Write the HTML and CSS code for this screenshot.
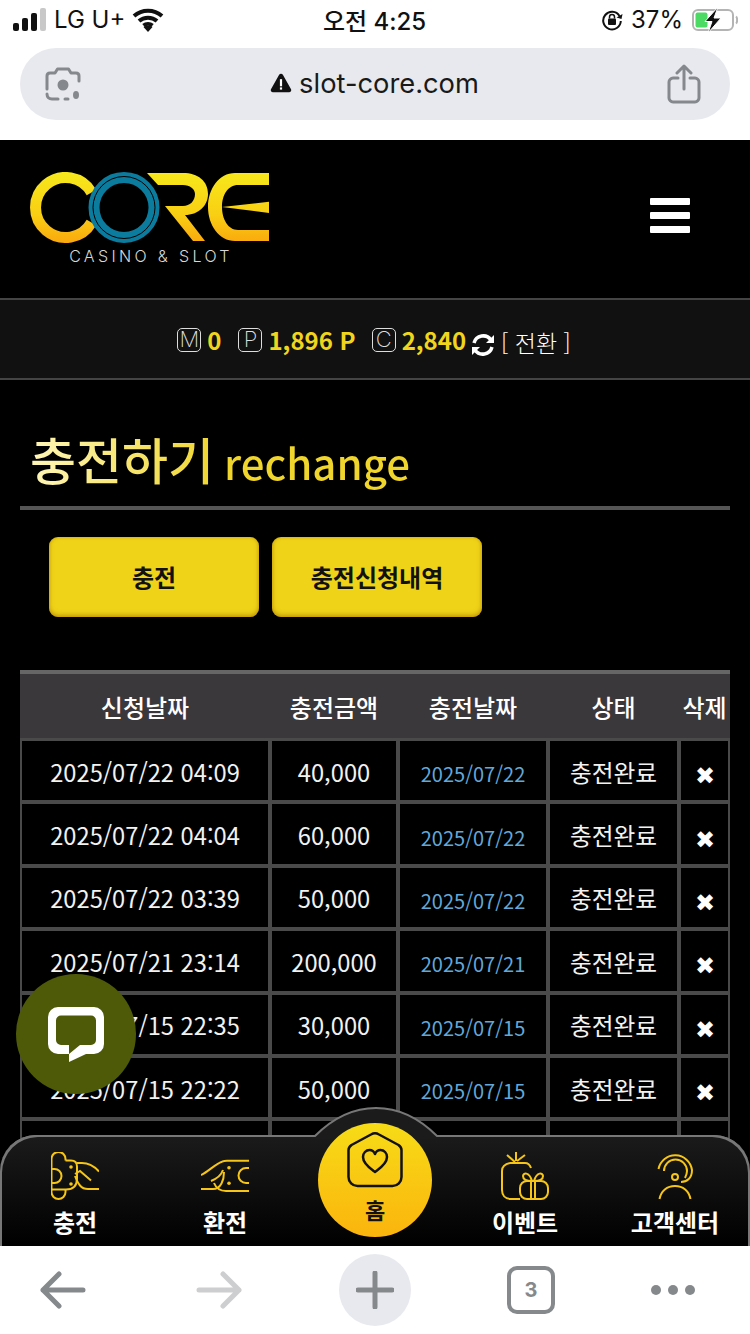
FILE: index.html
```html
<!DOCTYPE html>
<html lang="ko">
<head>
    <meta charset="utf-8">
    <title>CORE - 충전하기</title>
    <link rel="stylesheet" href="styles.css">
</head>
<body>
<div class="phone">
    <!-- 상태바 -->
    <div class="status-bar">
        <div class="status-left">
            <svg class="signal" width="34" height="24" viewBox="0 0 34 24"><rect x="0" y="15" width="6" height="8" rx="2" fill="#111"/><rect x="9" y="10" width="6" height="13" rx="2" fill="#111"/><rect x="18" y="5" width="6" height="18" rx="2" fill="#111"/><rect x="27" y="0" width="6" height="23" rx="2" fill="#c8c8c8"/></svg>
            <span>LG U+</span>
            <svg width="32" height="24" viewBox="0 0 32 24"><path d="M2 8c8-7 20-7 28 0M7 13c5-4.500 13-4.500 18 0M11.500 17.500c2.500-2 6.500-2 9 0" fill="none" stroke="#111" stroke-width="4"/><path d="M16 24l-4.500-5c2.500-2 6.500-2 9 0z" fill="#111"/></svg>
        </div>
        <div class="status-time">오전 4:25</div>
        <div class="status-right">
            <svg class="lock-rot" width="22" height="22" viewBox="0 0 22 22"><path d="M18.500 7A8.800 8.800 0 1 0 19.800 12" fill="none" stroke="#111" stroke-width="2"/><path d="M15.500 7.500l5 1.500 1-5z" fill="#111" transform="translate(0 1)"/><rect x="7" y="9.500" width="8" height="6.500" rx="1" fill="#111"/><path d="M8.500 9.500V8a2.500 2.500 0 0 1 5 0v1.500" fill="none" stroke="#111" stroke-width="1.500"/></svg>
            <span>37%</span>
            <svg class="battery" width="46" height="26" viewBox="0 0 46 26"><rect x="1" y="3" width="40" height="20" rx="5" fill="none" stroke="#b4b4b4" stroke-width="2"/><rect x="3.500" y="5.500" width="12" height="15" rx="2" fill="#4cd964"/><path d="M44 9.500c1.500 1 1.500 6 0 7" fill="none" stroke="#b4b4b4" stroke-width="2"/><path d="M26 0L13 14.500h7L16 26l13-15h-7z" fill="#111" stroke="#fff" stroke-width="1"/></svg>
        </div>
    </div>

    <!-- 주소창 -->
    <div class="url-wrap">
        <div class="url-bar">
            <svg width="38" height="38" viewBox="0 0 38 38" fill="none" stroke="#85888d" stroke-width="3" stroke-linecap="round" stroke-linejoin="round"><path d="M3 24V11c0-2 1-3 3-3h5l2.500-4h11l2.500 4h5c2 0 3 1 3 3v5"/><path d="M3 29c0 3 2 5 5 5h6"/><path d="M21 34h3"/><circle cx="19" cy="20" r="4" fill="#85888d"/><ellipse cx="32" cy="30" rx="3" ry="4" fill="#85888d" stroke="none"/></svg>
            <div class="url-text">
                <svg width="22" height="22" viewBox="0 0 20 20"><path d="M10 1.500a2 2 0 0 1 1.700 1l7.300 13a2 2 0 0 1-1.700 3H2.700a2 2 0 0 1-1.700-3l7.300-13a2 2 0 0 1 1.700-1z" fill="#111"/><rect x="9" y="6.500" width="2" height="6.500" fill="#fff"/><rect x="9" y="14" width="2" height="2" fill="#fff"/></svg>
                <span>slot-core.com</span>
            </div>
            <svg width="34" height="40" viewBox="0 0 34 40" fill="none" stroke="#85888d" stroke-width="3" stroke-linecap="round" stroke-linejoin="round"><path d="M17 25V3M10 9l7-7 7 7"/><path d="M11 14H6c-2 0-4 2-4 4v16c0 2 2 4 4 4h22c2 0 4-2 4-4V18c0-2-2-4-4-4h-5"/></svg>
        </div>
    </div>

    <!-- 사이트 본문 -->
    <div class="site">
        <header class="site-header">
            <div class="logo">
                <svg width="240" height="72" viewBox="0 0 240 72" class="logo-mark">
                    <defs>
                        <linearGradient id="gold" gradientUnits="userSpaceOnUse" x1="0" y1="0" x2="0" y2="71"><stop offset="0" stop-color="#f7e81c"/><stop offset=".6" stop-color="#f9cf13"/><stop offset="1" stop-color="#faa80e"/></linearGradient>
                    </defs>
                    <path d="M61.500 20.500A30 30 0 1 0 61.500 50.500" fill="none" stroke="url(#gold)" stroke-width="11"/>
                    <path d="M117 1H153C168 1 178 9 178 22C178 34 168 43 155 43L175 69H163L135 34H153C160 34 165 29 165 22C165 17 160 13 153 13H128Z" fill="url(#gold)"/>
                    <path d="M239 1V13H208C198 13 192 23 192 35C192 47 198 58 208 58H239V69H205C189 69 178 53 178 35C178 17 189 1 205 1Z" fill="url(#gold)"/>
                    <path d="M192 35L239 29.700V41Z" fill="url(#gold)"/>
                    <circle cx="94" cy="35.500" r="30" fill="none" stroke="#0b7c9e" stroke-width="11"/>
                    <circle cx="94" cy="35.500" r="31" fill="none" stroke="#000" stroke-width="1"/>
                </svg>
                <div class="logo-sub">CASINO &amp; SLOT</div>
            </div>
            <div class="hamburger"><i></i><i></i><i></i></div>
        </header>

        <div class="balance-bar">
            <span class="coin-box">M</span><b class="coin m-val">0</b>
            <span class="coin-box">P</span><b class="coin p-val">1,896 P</b>
            <span class="coin-box">C</span><b class="coin">2,840</b>
            <svg class="swap" width="24" height="24" viewBox="0 0 24 24" fill="none" stroke="#fff" stroke-width="3.500"><path d="M3 10a9.500 9.500 0 0 1 17-3"/><path d="M21 14a9.500 9.500 0 0 1-17 3"/><path d="M23 2v8h-8z" fill="#fff" stroke="none"/><path d="M1 22v-8h8z" fill="#fff" stroke="none"/></svg>
            <span class="swap-text">[ 전환 ]</span>
        </div>

        <div class="page-title">
            <h1>충전하기 <span>rechange</span></h1>
        </div>

        <div class="tab-row">
            <a class="tab-btn">충전</a>
            <a class="tab-btn">충전신청내역</a>
        </div>

        <table class="history">
            <colgroup><col class="c1"><col class="c2"><col class="c3"><col class="c4"><col class="c5"></colgroup>
            <thead>
                <tr><th>신청날짜</th><th>충전금액</th><th>충전날짜</th><th>상태</th><th>삭제</th></tr>
            </thead>
            <tbody>
                <tr><td>2025/07/22 04:09</td><td>40,000</td><td class="paid">2025/07/22</td><td>충전완료</td><td class="del">✖</td></tr>
                <tr><td>2025/07/22 04:04</td><td>60,000</td><td class="paid">2025/07/22</td><td>충전완료</td><td class="del">✖</td></tr>
                <tr><td>2025/07/22 03:39</td><td>50,000</td><td class="paid">2025/07/22</td><td>충전완료</td><td class="del">✖</td></tr>
                <tr><td>2025/07/21 23:14</td><td>200,000</td><td class="paid">2025/07/21</td><td>충전완료</td><td class="del">✖</td></tr>
                <tr><td>2025/07/15 22:35</td><td>30,000</td><td class="paid">2025/07/15</td><td>충전완료</td><td class="del">✖</td></tr>
                <tr><td>2025/07/15 22:22</td><td>50,000</td><td class="paid">2025/07/15</td><td>충전완료</td><td class="del">✖</td></tr>
                <tr><td>2025/07/15 21:10</td><td>50,000</td><td class="paid">2025/07/15</td><td>충전완료</td><td class="del">✖</td></tr>
            </tbody>
        </table>

        <!-- 채팅 버튼 -->
        <div class="chat-btn">
            <svg width="56" height="55" viewBox="0 0 56 55"><path d="M10 0h36a10 10 0 0 1 10 10v27a10 10 0 0 1-10 10H38L21 55V47H10A10 10 0 0 1 0 37V10A10 10 0 0 1 10 0z" fill="#fff"/><path d="M13 8.500h30a5 5 0 0 1 5 5v19.500a5 5 0 0 1-5 5H32L21 47V38H13a5 5 0 0 1-5-5V13.500a5 5 0 0 1 5-5z" fill="#4f5a08"/></svg>
        </div>

        <!-- 하단 메뉴 -->
        <nav class="bottom-nav">
            <svg class="nav-hump" width="126" height="32" viewBox="0 0 126 32"><path d="M0 32V29H2C22 9 42 1 63 1S104 9 124 29H126V32Z" fill="#1b1b1b"/><path d="M0 29H2C22 9 42 1 63 1S104 9 124 29H126" fill="none" stroke="#777" stroke-width="2"/></svg>
            <div class="nav-item">
                <svg width="48" height="48" viewBox="0 0 48 48" fill="none" stroke="#f5c518" stroke-width="2"><path d="M14.500 8.500V7a7 7 0 0 0-14 0V40a7 7 0 0 0 14 0V38"/><path d="M.5 17h3a7 7 0 0 1 0 14h-3"/><path d="M14.500 8.500H20c5 0 6 3 6 6v12c0 8-5 11-11 11H.5"/><path d="M26 11h5c7 0 12 3 17 8.500"/><path d="M24 22l5-3 11 9.500"/><path d="M24 24c3 8 6 13 13 13H48"/><circle cx="20" cy="15" r="1.800" fill="#f5c518" stroke="none"/><circle cx="20" cy="32" r="1.800" fill="#f5c518" stroke="none"/></svg>
                <span>충전</span>
            </div>
            <div class="nav-item">
                <svg width="48" height="48" viewBox="0 0 48 48" fill="none" stroke="#f5c518" stroke-width="2"><path d="M48 8.700H26c-2 0-3 0-5 1C14 12 7 20 0 23"/><path d="M0 37H12C20 37 23 28 23 20"/><path d="M10 29c5-2 10-5 12-11"/><path d="M13 31c2 5 5 8 12 8H48"/><path d="M48 16h-3a7.500 7.500 0 0 0 0 15h3"/><circle cx="28" cy="15.700" r="1.800" fill="#f5c518" stroke="none"/><circle cx="28" cy="31.300" r="1.800" fill="#f5c518" stroke="none"/></svg>
                <span>환전</span>
            </div>
            <div class="nav-slot">
                <div class="nav-home">
                    <svg width="56" height="56" viewBox="0 0 56 56" fill="none" stroke="#111" stroke-width="2.500" stroke-linejoin="round"><path d="M1.500 18c0-2 1-3.500 3-5L24 2.500c2.500-1.500 5.500-1.500 8 0L51.500 13c2 1.500 3 3 3 5v27c0 5-4 9-9 9h-35c-5 0-9-4-9-9z"/><path d="M28 40c-4-3-12-8-12-15 0-4 3-7 6.500-7 2.500 0 4.500 1.500 5.500 4 1-2.500 3-4 5.500-4 3.500 0 6.500 3 6.500 7 0 7-8 12-12 15z"/></svg>
                    <span>홈</span>
                </div>
            </div>
            <div class="nav-item">
                <svg width="48" height="48" viewBox="0 0 48 48" fill="none" stroke="#f5c518" stroke-width="2"><path d="M6 3l8 7M15 0v9M24 3l-8 6"/><path d="M9 11C4 12 1 14 1 19V38c0 5 3 9 9 9h9"/><path d="M9 11H24c3 0 5 2 6 5"/><rect x="19" y="29" width="28" height="18" rx="7"/><path d="M30 29V47M34 29V47"/><path d="M31 29c-5 0-9-1-9-5 0-3 6-5 9 5z"/><path d="M33 29c5 0 9-1 9-5 0-3-6-5-9 5z"/></svg>
                <span>이벤트</span>
            </div>
            <div class="nav-item">
                <svg width="48" height="48" viewBox="0 0 48 48" fill="none" stroke="#f5c518" stroke-width="2"><path d="M7.500 17A17 17 0 0 1 41 18c0 8-5 12-11 12"/><path d="M13 19a11.500 11.500 0 0 1 23 0c0 3-1 5-2 7"/><circle cx="24" cy="25" r="3"/><path d="M8.500 47C10 39 16 34 24 34s14 5 15.500 13"/></svg>
                <span>고객센터</span>
            </div>
        </nav>
    </div>

    <!-- 브라우저 툴바 -->
    <div class="toolbar">
        <svg width="48" height="38" viewBox="0 0 48 38" fill="none" stroke="#85898c" stroke-width="5" stroke-linecap="round" stroke-linejoin="round"><path d="M44 19H4M20 3L4 19l16 16"/></svg>
        <svg class="forward" width="48" height="38" viewBox="0 0 48 38" fill="none" stroke="#cdced0" stroke-width="5" stroke-linecap="round" stroke-linejoin="round"><path d="M4 19h40M28 3l16 16-16 16"/></svg>
        <div class="plus-btn"><svg width="38" height="38" viewBox="0 0 38 38" stroke="#85898c" stroke-width="5" stroke-linecap="round"><path d="M2 19h34M19 2v34"/></svg></div>
        <div class="tab-count">3</div>
        <div class="dots"><i></i><i></i><i></i></div>
    </div>
</div>
</body>
</html>
```

FILE: styles.css
```css
* {
    box-sizing: border-box;
}

html, body {
    margin: 0;
    padding: 0;
    background: #fff;
}

body {
    font-family: "Noto Sans CJK KR", "Noto Sans", sans-serif;
}

.phone {
    width: 750px;
    height: 1334px;
    display: flex;
    flex-direction: column;
    overflow: hidden;
}

/* status bar */
.status-bar {
    height: 48px;
    padding: 0 12px 9px 13px;
    display: flex;
    align-items: center;
    justify-content: space-between;
    font-family: "Inter", "Noto Sans CJK KR", sans-serif;
    color: #111;
    font-size: 24px;
}

.status-left, .status-right {
    width: 210px;
    display: flex;
    align-items: center;
    gap: 7px;
}

.status-right {
    justify-content: flex-end;
}

.lock-rot {
    margin-right: 1px;
}

.battery {
    margin-left: 2px;
}

.status-time {
    font-weight: 500;
    font-size: 24px;
    margin-right: 2px;
}

/* url bar */
.url-wrap {
    height: 92px;
    padding: 0 20px;
}

.url-bar {
    height: 72px;
    background: #e8e9ee;
    border-radius: 36px;
    padding: 0 29px 0 24px;
    display: flex;
    align-items: center;
    justify-content: space-between;
}

.url-text {
    display: flex;
    align-items: center;
    gap: 7px;
    font-size: 27.300px;
    color: #1a1a1a;
    font-family: "Inter", sans-serif;
    font-weight: 400;
    margin-bottom: 2px;
}

/* site */
.site {
    flex: 1;
    background: #000;
    position: relative;
    overflow: hidden;
}

.site-header {
    height: 160px;
    padding: 32px 60px 0 30px;
    display: flex;
    justify-content: space-between;
    border-bottom: 2px solid #444;
}

.logo-mark {
    display: block;
}

.logo-sub {
    color: #d8d8d8;
    font-family: "Inter", sans-serif;
    font-size: 16px;
    font-weight: 300;
    letter-spacing: 3.350px;
    text-align: center;
    margin-top: 2px;
    width: 242px;
    line-height: 20px;
}

.hamburger {
    width: 40px;
    display: flex;
    flex-direction: column;
    gap: 7px;
    padding-top: 26px;
}

.hamburger i {
    display: block;
    height: 7px;
    background: #fff;
    border-radius: 1px;
}

.balance-bar {
    height: 80px;
    background: #111;
    border-bottom: 2px solid #444;
    display: flex;
    align-items: center;
    justify-content: center;
    padding: 2px 2px 0 0;
}

.coin-box {
    width: 24px;
    height: 24px;
    border: 1px solid #ddd;
    border-radius: 5px;
    color: #ddd;
    font-size: 22px;
    font-weight: 200;
    line-height: 21px;
    text-align: center;
    font-family: "Inter", sans-serif;
}

.coin {
    color: #f0d51c;
    font-size: 24px;
    font-weight: 700;
    margin-left: 6px;
    line-height: 1;
}

.m-val {
    margin-right: 17px;
}

.p-val {
    margin-right: 16px;
}

.swap {
    margin-left: 5px;
    margin-top: 9px;
}

.swap-text {
    color: #fff;
    font-size: 23px;
    margin-left: 6px;
    margin-top: 3px;
    font-weight: 300;
}

.page-title {
    margin: 40px 20px 0;
    height: 90px;
    border-bottom: 4px solid #555;
    padding-left: 10px;
}

.page-title h1 {
    display: inline-block;
    margin: 0;
    font-size: 50px;
    line-height: 76px;
    font-weight: 500;
    background: linear-gradient(90deg, #fff6b8, #f0d52c 50%);
    -webkit-background-clip: text;
    background-clip: text;
    color: transparent;
}

.page-title h1 span {
    font-size: 42px;
    font-weight: 500;
    margin-left: -4px;
}

.tab-row {
    display: flex;
    gap: 13px;
    padding: 27px 0 0 49px;
}

.tab-btn {
    width: 210px;
    height: 80px;
    padding-bottom: 2px;
    background: #efd318;
    border-radius: 9px;
    box-shadow: inset 0 -2px 5px rgba(170, 120, 0, .6), inset 0 0 3px rgba(170, 120, 0, .4);
    color: #111;
    font-size: 24px;
    font-weight: 700;
    display: flex;
    align-items: center;
    justify-content: center;
}

.history {
    margin: 53px 0 0 20px;
    width: 710px;
    border-collapse: separate;
    border-spacing: 0;
    table-layout: fixed;
}

.c1 { width: 252px; }
.c2 { width: 128px; }
.c3 { width: 150px; }
.c4 { width: 131px; }
.c5 { width: 49px; }

.history th {
    height: 68px;
    background: #3a383b;
    border-top: 4px solid #666;
    color: #fff;
    font-size: 24px;
    font-weight: 500;
    padding: 0 4px 0 0;
}

.history td {
    height: 63.400px;
    border-right: 4px solid #4a4a4a;
    border-bottom: 4px solid #4a4a4a;
    color: #f2f2f2;
    font-size: 23.700px;
    font-weight: 400;
    text-align: center;
    padding: 2px 0 0;
    white-space: nowrap;
}

.history tbody tr:first-child td {
    height: 66.400px;
    border-top: 3px solid #4a4a4a;
}

.history td:first-child {
    border-left: 2px solid #4a4a4a;
}

.history th:first-child {
    padding-left: 2px;
}

.history th:last-child {
    padding-right: 2px;
}

.history td:last-child {
    border-right-width: 2px;
}

.history td.paid {
    color: #62a8d8;
    font-size: 20px;
    padding-top: 6px;
}

.history td.del {
    color: #fff;
    font-size: 24px;
    padding-top: 6px;
}

.chat-btn {
    position: absolute;
    left: 16px;
    top: 834px;
    width: 120px;
    height: 120px;
    border-radius: 50%;
    background: #4f5a08;
    display: flex;
    align-items: center;
    justify-content: center;
}

.bottom-nav {
    position: absolute;
    left: 0;
    right: 0;
    bottom: 0;
    height: 111px;
    background: linear-gradient(#1b1b1b, #000);
    box-shadow: inset 2px 2px 0 #777, inset -2px 2px 0 #777;
    border-radius: 36px 36px 0 0;
    display: grid;
    grid-template-columns: repeat(5, 1fr);
}

.nav-hump {
    position: absolute;
    left: 313px;
    top: -28px;
}

.nav-item {
    display: flex;
    flex-direction: column;
    align-items: center;
    padding-top: 17px;
}

.nav-item span {
    color: #fff;
    font-size: 24px;
    font-weight: 700;
    line-height: 32px;
    margin-top: 6px;
    white-space: nowrap;
}

.nav-slot {
    position: relative;
}

.nav-home {
    position: absolute;
    left: 18px;
    top: -12px;
    width: 114px;
    height: 114px;
    border-radius: 50%;
    background: linear-gradient(#f7dc17, #fbb40d);
    display: flex;
    flex-direction: column;
    align-items: center;
    padding-top: 9px;
}

.nav-home span {
    font-size: 22px;
    font-weight: 700;
    color: #111;
    line-height: 26px;
    margin-top: 8px;
}

/* toolbar */
.toolbar {
    height: 88px;
    background: #fff;
    display: flex;
    align-items: center;
    gap: 96px;
    padding-left: 39px;
}

.forward {
    margin-left: 12px;
}

.plus-btn {
    width: 72px;
    height: 72px;
    border-radius: 50%;
    background: #e8e9ee;
    display: flex;
    align-items: center;
    justify-content: center;
}

.tab-count {
    width: 48px;
    height: 48px;
    border: 4px solid #85898c;
    border-radius: 10px;
    color: #85898c;
    font-family: "Inter", sans-serif;
    font-size: 20px;
    font-weight: 700;
    display: flex;
    align-items: center;
    justify-content: center;
}

.dots {
    display: flex;
    gap: 7px;
}

.dots i {
    width: 10px;
    height: 10px;
    border-radius: 50%;
    background: #85898c;
}
```
